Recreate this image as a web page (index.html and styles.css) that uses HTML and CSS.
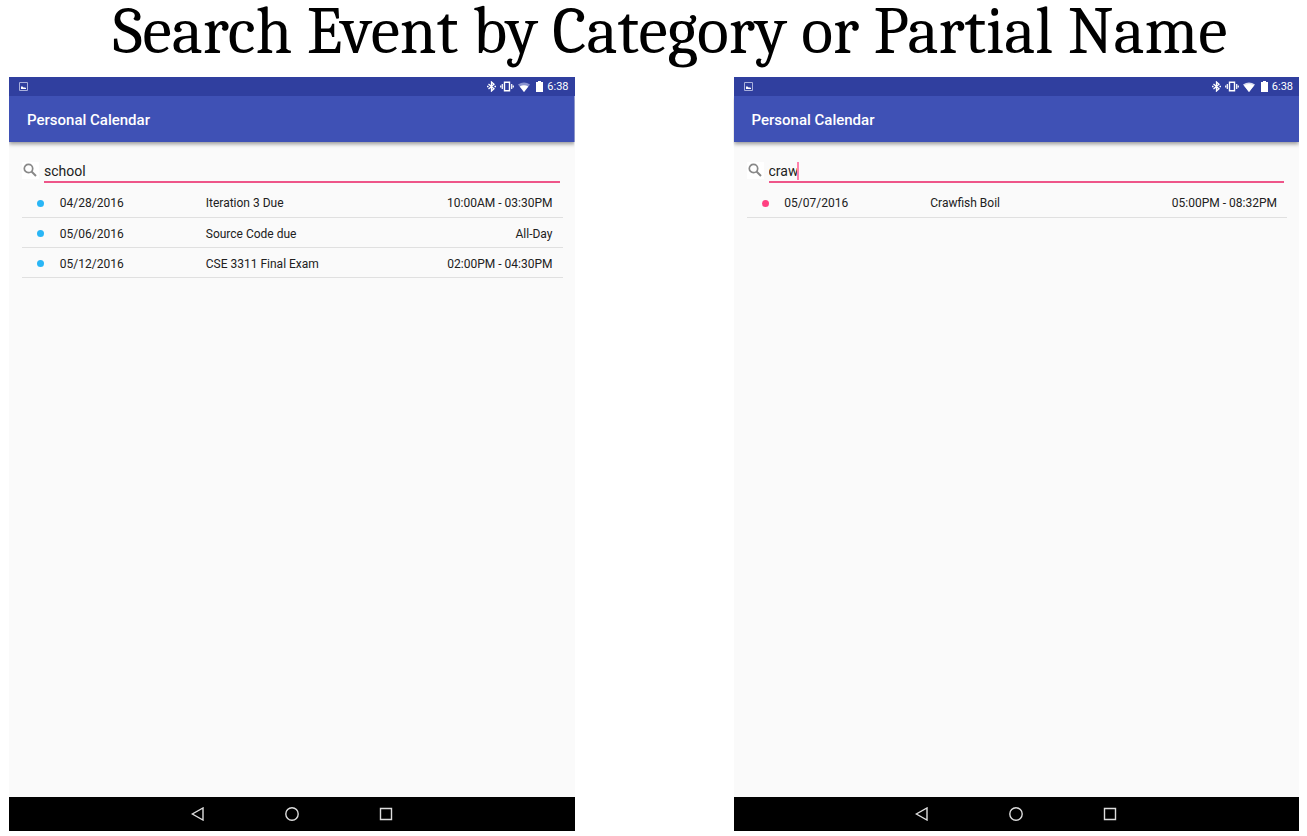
FILE: index.html
```html
<!DOCTYPE html>
<html lang="en">
<head>
<meta charset="utf-8">
<title>Search Event by Category or Partial Name</title>
<link rel="stylesheet" href="styles.css">
</head>
<body>
<svg class="defs" aria-hidden="true">
  <symbol id="picture" viewBox="0 0 9 9"><path d="M.5.5h8v8h-8z" fill="none" stroke="#a9b0dc"/><path d="M2 7V4.500h1.500L4.500 5.500H6L7 6v1z" fill="#fff"/></symbol>
  <symbol id="bluetooth" viewBox="0 0 9 11"><path d="M1.500 3l5.500 4.800L4.500 10V1L7 3.200 1.500 8" fill="none" stroke="#fff" stroke-width="1.300"/><path d="M0 4.700h1.600v1.600H0zM7.400 4.700H9v1.600H7.400z" fill="#fff"/></symbol>
  <symbol id="vibrate" viewBox="0 0 14 11"><path d="M4.500 1.200h5v8.600h-5z" fill="none" stroke="#fff" stroke-width="1.400"/><path d="M2.300 3v5M11.700 3v5M.7 4.500v2M13.300 4.500v2" stroke="#fff" stroke-width="1.200"/></symbol>
  <symbol id="wifi" viewBox="0 0 12 10"><path d="M0 2.500Q6-1.500 12 2.500L6 10z" fill="#8a93cf"/><path d="M1.700 4.500Q6 1.800 10.300 4.500L6 10z" fill="#fff"/></symbol>
  <symbol id="wifi-full" viewBox="0 0 12 10"><path d="M0 2.500Q6-1.500 12 2.500L6 10z" fill="#d9dcf0"/><path d="M1 3.500Q6 .5 11 3.500L6 10z" fill="#fff"/></symbol>
  <symbol id="battery" viewBox="0 0 7 11"><path d="M0 1h2V0h3v1h2v10H0z" fill="#fff"/></symbol>
  <symbol id="search" viewBox="0 0 17 17"><circle cx="6.500" cy="6.500" r="4.200" fill="none" stroke="#888" stroke-width="1.700"/><path d="M9.500 9.500l4.500 4.500" stroke="#888" stroke-width="2"/></symbol>
  <symbol id="back" viewBox="0 0 14 14"><path d="M12 1v12L1.300 7z" fill="none" stroke="#ddd" stroke-width="1.400"/></symbol>
  <symbol id="home" viewBox="0 0 14 14"><circle cx="7" cy="7" r="6.200" fill="none" stroke="#ddd" stroke-width="1.400"/></symbol>
  <symbol id="recent" viewBox="0 0 14 14"><path d="M1.500 1.500h11v11h-11z" fill="none" stroke="#ddd" stroke-width="1.400"/></symbol>
</svg>
<h1 class="title">Search Event by Category or Partial Name</h1>
<main class="screens">
  <section class="device">
    <div class="status">
      <svg class="i-picture"><use href="#picture"/></svg>
      <div class="status-right">
        <svg class="i-bluetooth"><use href="#bluetooth"/></svg>
        <svg class="i-vibrate"><use href="#vibrate"/></svg>
        <svg class="i-wifi"><use href="#wifi"/></svg>
        <svg class="i-battery"><use href="#battery"/></svg>
        <span class="clock">6:38</span>
      </div>
    </div>
    <header class="appbar"><h2 class="app-name">Personal Calendar</h2></header>
    <div class="content">
      <div class="search">
        <label class="search-label" for="q1" aria-label="Search"><svg class="i-search"><use href="#search"/></svg></label>
        <div class="field"><input class="query" id="q1" type="text" value="school"></div>
      </div>
      <table class="events">
        <tr><td class="mark"><span class="dot dot-school"></span></td><td class="date">04/28/2016</td><td>Iteration 3 Due</td><td class="time">10:00AM - 03:30PM</td></tr>
        <tr><td class="mark"><span class="dot dot-school"></span></td><td class="date">05/06/2016</td><td>Source Code due</td><td class="time">All-Day</td></tr>
        <tr><td class="mark"><span class="dot dot-school"></span></td><td class="date">05/12/2016</td><td>CSE 3311 Final Exam</td><td class="time">02:00PM - 04:30PM</td></tr>
      </table>
    </div>
    <nav class="navbar">
      <button class="nav-button" aria-label="Back"><svg class="i-nav"><use href="#back"/></svg></button>
      <button class="nav-button" aria-label="Home"><svg class="i-nav"><use href="#home"/></svg></button>
      <button class="nav-button" aria-label="Recent apps"><svg class="i-nav"><use href="#recent"/></svg></button>
    </nav>
  </section>
  <section class="device">
    <div class="status">
      <svg class="i-picture"><use href="#picture"/></svg>
      <div class="status-right">
        <svg class="i-bluetooth"><use href="#bluetooth"/></svg>
        <svg class="i-vibrate"><use href="#vibrate"/></svg>
        <svg class="i-wifi"><use href="#wifi-full"/></svg>
        <svg class="i-battery"><use href="#battery"/></svg>
        <span class="clock">6:38</span>
      </div>
    </div>
    <header class="appbar"><h2 class="app-name">Personal Calendar</h2></header>
    <div class="content">
      <div class="search">
        <label class="search-label" for="q2" aria-label="Search"><svg class="i-search"><use href="#search"/></svg></label>
        <div class="field"><input class="query" id="q2" type="text" value="craw"><span class="caret"></span></div>
      </div>
      <table class="events">
        <tr><td class="mark"><span class="dot dot-personal"></span></td><td class="date">05/07/2016</td><td>Crawfish Boil</td><td class="time">05:00PM - 08:32PM</td></tr>
      </table>
    </div>
    <nav class="navbar">
      <button class="nav-button" aria-label="Back"><svg class="i-nav"><use href="#back"/></svg></button>
      <button class="nav-button" aria-label="Home"><svg class="i-nav"><use href="#home"/></svg></button>
      <button class="nav-button" aria-label="Recent apps"><svg class="i-nav"><use href="#recent"/></svg></button>
    </nav>
  </section>
</main>
</body>
</html>
```
FILE: styles.css
```css
* { box-sizing: border-box; }
body {
  margin: 0;
  min-height: 100vh;
  padding: 0 8px 5px 9px;
  display: flex;
  flex-direction: column;
  background: #fff;
  color: #212121;
  font-family: Roboto, "Liberation Sans", sans-serif;
  font-size: 12px;
}
svg { display: block; flex: none; }
.defs { display: none; }
.title {
  margin: 0;
  padding-left: 32px;
  height: 77px;
  line-height: 64px;
  font-family: Cambria, "Liberation Serif", serif;
  font-size: 66px;
  font-weight: 400;
  color: #000;
  text-align: center;
  white-space: nowrap;
}
.screens {
  flex: 1;
  display: grid;
  grid-template-columns: 1fr 1fr;
  gap: 159px;
}
.device { display: flex; flex-direction: column; background: #fafafa; }
.status {
  height: 19px;
  padding: 0 6px 0 10px;
  display: flex;
  align-items: center;
  justify-content: space-between;
  background: #303f9f;
  color: #fff;
}
.status-right { display: flex; align-items: center; }
.i-picture { width: 9px; height: 9px; }
.i-bluetooth { width: 9px; height: 11px; margin-right: 4px; }
.i-vibrate { width: 14px; height: 11px; margin-right: 4px; }
.i-wifi { width: 12px; height: 10px; margin-right: 6px; }
.i-battery { width: 7px; height: 11px; margin-right: 4px; }
.clock { padding-top: 1px; font-size: 11px; font-weight: 400; line-height: 18px; }
.appbar {
  height: 46px;
  padding: 2px 18px 0;
  display: flex;
  align-items: center;
  background: #3f51b5;
  color: #fff;
  box-shadow: 0 2px 4px rgba(0, 0, 0, .4);
  clip-path: inset(0 0 -8px 0);
}
.app-name { margin: 0; font-size: 15px; font-weight: 500; line-height: 20px; }
.content { flex: 1; padding: 19px 12px 0 13px; }
.search { display: flex; align-items: flex-start; gap: 5px; padding-right: 3px; }
.search-label { margin-top: 1px; background: #fff; }
.i-search { width: 17px; height: 17px; }
.field { position: relative; flex: 1; }
.query {
  display: block;
  width: 100%;
  height: 22px;
  padding: 0;
  border: 0;
  border-bottom: 2px solid #ee5589;
  outline: 0;
  background: transparent;
  color: #212121;
  font: 14px/20px Roboto, "Liberation Sans", sans-serif;
}
.caret {
  position: absolute;
  left: 28px;
  top: 1px;
  width: 2px;
  height: 18px;
  background: #ff80ab;
}
.events { width: 100%; margin-top: 4px; border-collapse: collapse; table-layout: fixed; }
.events td { height: 30px; padding: 3px 0 0; border-bottom: 1px solid #e0e0e0; line-height: 16px; }
.events .mark { width: 7%; padding-left: 15px; }
.events .date { width: 27%; }
.events .time { padding-right: 10px; text-align: right; }
.dot { display: block; width: 7px; height: 7px; border-radius: 50%; }
.dot-school { background: #29b6f6; }
.dot-personal { background: #ff4081; }
.navbar { height: 34px; display: flex; justify-content: center; background: #000; }
.nav-button {
  width: 94px;
  padding: 0;
  border: 0;
  display: flex;
  align-items: center;
  justify-content: center;
  background: transparent;
}
.i-nav { width: 14px; height: 14px; }
```
